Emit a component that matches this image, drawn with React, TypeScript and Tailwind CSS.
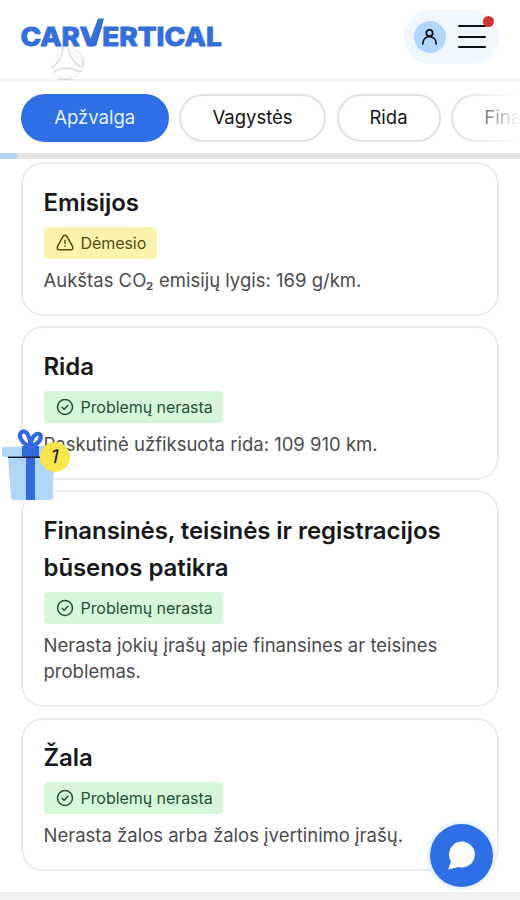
import React from "react";

function Logo() {
  return (
    <svg width="204" height="34" viewBox="-1 -2 204 34" className="-ml-px block overflow-visible" fill="#346fd9" fontFamily="Inter, 'Liberation Sans', sans-serif" fontWeight="800" fontSize="25.4" stroke="#346fd9" strokeWidth="0.8">
      <text x="-0.6" y="27.5" textLength="59.5" lengthAdjust="spacingAndGlyphs">CAR</text>
      <text x="58.6" y="27.5" textLength="22.5" lengthAdjust="spacingAndGlyphs">V</text>
      <path d="M77 0.4h6l-7.6 27.4h-8.6z" strokeWidth="0" />
      <text x="81.2" y="27.5" textLength="119.5" lengthAdjust="spacingAndGlyphs">ERTICAL</text>
    </svg>
  );
}

function Emblem() {
  return (
    <svg width="36" height="36" viewBox="0 0 36 36" fill="none" className="absolute left-[49px] top-[45px]">
      <path d="M19 2C21 12 24 17 33 23C36 14 32 6 27 4" fill="#fafafa" />
      <path d="M27 5C34 10 36 20 31 27C24 35 13 36 6 29" stroke="#ededed" />
      <path d="M14 2C13 12 10 18 2 23M19 2C20 12 24 18 32 22M4 28C12 22 22 22 31 27" stroke="#d4d4d4" strokeWidth="1.1" />
      <path d="M10 33.5C14 35 20 35 23 33.5" stroke="#cfcfcf" />
      <path d="M33.5 12C34.5 16 34.5 18 33.8 22M33 25l-1.5 2" stroke="#cfcfcf" />
    </svg>
  );
}

type Status = "ok" | "warn";

function Badge({ status }: { status: Status }) {
  const warn = status === "warn";
  return (
    <div className={`flex h-[32px] w-fit items-center rounded-[4px] pr-[10.5px] pl-[12px] ${warn ? "bg-[#fcf3ae] text-[#574a12]" : "bg-[#d7f6da] text-[#235330]"}`}>
      <svg width="18" height="18" viewBox="0 0 18 18" fill="none" stroke="currentColor" strokeWidth="1.5" strokeLinecap="round" strokeLinejoin="round">
        {warn ? (
          <path d="M7.2 2.2Q9 .2 10.8 2.2L16.5 12.4Q17.5 15.5 14.8 15.8H3.2Q.5 15.5 1.5 12.4zM9 6.2v3.4M9 12v.2" />
        ) : (
          <>
            <circle cx="9" cy="9" r="7.5" />
            <path d="M6 9.2l2.1 2.1L12 7.2" />
          </>
        )}
      </svg>
      <span className="ml-[7px] text-[16px] leading-[32px] tracking-[-0.06px]">{warn ? "Dėmesio" : "Problemų nerasta"}</span>
    </div>
  );
}

function Card({ title, status, children }: { title: React.ReactNode; status: Status; children: React.ReactNode }) {
  return (
    <section className="rounded-[22px] border-2 border-[#ebebed] bg-white px-[20.5px] pt-[19.5px] pb-[20.5px]">
      <h2 className="text-[24px] leading-[37px] font-semibold tracking-[-0.08px] text-[#17181b]">{title}</h2>
      <div className="mt-[6px]">
        <Badge status={status} />
      </div>
      <p className="mt-[8px] text-[18.5px] leading-[26.5px] text-[#4b4b4d]">{children}</p>
    </section>
  );
}

const pill = "flex h-[48px] shrink-0 items-center justify-center rounded-full text-[18.5px]";
const outlined = "border-2 border-[#e0e0e2] text-[#141416]";

function Gift() {
  return (
    <div className="absolute top-[427px] left-0 h-[74px] w-[72px]">
      <svg width="72" height="74" viewBox="0 0 72 74" fill="none">
        <path d="M8 29h46l-1 41q0 3-3 3H14q-3 0-3-3z" fill="#b0d7fb" />
        <path d="M2 20l43-1v11H4q-2 0-2-3z" fill="#b0d7fb" />
        <path d="M22 19h17v11H22z" fill="#3068dd" />
        <path d="M26 29h9v44h-9z" fill="#3068dd" />
        <path d="M29.5 19C22 17 18 9 21 5.500C26 1.500 30 9 30.500 19C31 10 37 4 40.500 8C42 13 37 18 30.500 19" stroke="#3068dd" strokeWidth="4.2" strokeLinejoin="round" />
        <path d="M8 30.3h32" stroke="#121923" strokeWidth="1.4" />
      </svg>
      <div className="absolute top-[15px] left-[40px] flex h-[30px] w-[30px] items-center justify-center rounded-full bg-[#f9e54c]">
        <span className="rotate-[12deg] text-[19px] leading-[20px] font-normal text-[#17181b]">1</span>
      </div>
    </div>
  );
}

export default function App() {
  return (
    <div className="relative h-[900px] w-[520px] overflow-hidden bg-white font-['Inter','Liberation_Sans',sans-serif]">
      <header className="flex h-[81px] items-start justify-between border-b-2 border-[#f0f0f2] pr-[21px] pl-[21px]">
        <div className="pt-[16px]">
          <Logo />
        </div>
        <div className="mt-[10px] flex h-[54px] w-[95px] items-center rounded-full bg-[#f0f6fe] pl-[10px]">
          <div className="flex h-[32px] w-[32px] items-center justify-center rounded-full bg-[#b0d6fb]">
            <svg width="18" height="18" viewBox="0 0 18 18" fill="none" stroke="#0c1118" strokeWidth="1.8" strokeLinecap="round">
              <circle cx="8.5" cy="5" r="3.2" />
              <path d="M1.8 15.8C2.2 6.2 14.8 6.2 15.2 15.8" />
            </svg>
          </div>
          <div className="relative -mt-px ml-[12px] flex flex-col gap-[8.5px]">
            <i className="h-[2px] w-[28px] rounded-full bg-[#0c1118]" />
            <i className="h-[2px] w-[28px] rounded-full bg-[#0c1118]" />
            <i className="h-[2px] w-[28px] rounded-full bg-[#0c1118]" />
            <b className="absolute -top-[9.5px] -right-[8px] h-[11px] w-[11px] rounded-full bg-[#cf3430]" />
          </div>
        </div>
      </header>
      <Emblem />
      <nav className="relative flex h-[72px] gap-[10.5px] pt-[13px] pl-[21px]">
        <div className={`${pill} w-[147.5px] bg-[#2f6fe6] text-[#e3f1ff]`}>Apžvalga</div>
        <div className={`${pill} ${outlined} w-[147px]`}>Vagystės</div>
        <div className={`${pill} ${outlined} w-[104px]`}>Rida</div>
        <div className={`${pill} ${outlined} w-[139px]`}>Finansai</div>
        <div className="absolute inset-y-0 right-0 w-[60px] bg-gradient-to-r from-white/0 to-white" />
      </nav>
      <div className="h-[6px] bg-[#e3e3e4]">
        <div className="h-full w-[17px] bg-[#b5d5f4]" />
      </div>
      <main className="flex flex-col gap-[10.5px] px-[21px] pt-[3px]">
        <Card title="Emisijos" status="warn">Aukštas CO₂ emisijų lygis: 169 g/km.</Card>
        <Card title="Rida" status="ok">Paskutinė užfiksuota rida: 109 910 km.</Card>
        <Card title={<>Finansinės, teisinės ir registracijos<br />būsenos patikra</>} status="ok">Nerasta jokių įrašų apie finansines ar teisines<br />problemas.</Card>
        <Card title="Žala" status="ok">Nerasta žalos arba žalos įvertinimo įrašų.</Card>
      </main>
      <footer className="mt-[21px] h-[12px] bg-[#efeff0]" />
      <Gift />
      <button className="absolute top-[824px] left-[430px] flex h-[63px] w-[63px] items-center justify-center rounded-full bg-[#2f6fe6] shadow-[0_0_4px_2px_#dcecff]">
        <svg width="28" height="29" viewBox="0 0 28 29" fill="#fff">
          <path d="M14.5 0.5a13 13 0 1 1-3.8 25.6L.2 28.4 2.9 20.2A13 13 0 0 1 14.5.5z" />
        </svg>
      </button>
    </div>
  );
}
